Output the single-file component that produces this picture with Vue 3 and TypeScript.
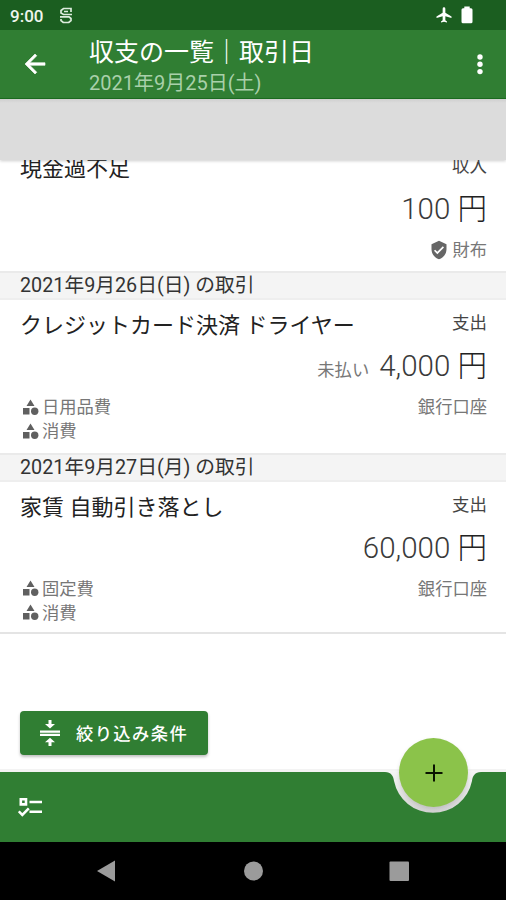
<script setup lang="ts">
interface Entry {
  title: string
  kind: string
  amount: string
  unpaid?: boolean
  account: string
  verified?: boolean
  categories: string[]
}
interface Group {
  date?: string
  entry: Entry
}

const groups: Group[] = [
  { entry: { title: '現金過不足', kind: '収入', amount: '100', account: '財布', verified: true, categories: [] } },
  {
    date: '2021年9月26日(日) の取引',
    entry: { title: 'クレジットカード決済 ドライヤー', kind: '支出', amount: '4,000', unpaid: true, account: '銀行口座', categories: ['日用品費', '消費'] },
  },
  {
    date: '2021年9月27日(月) の取引',
    entry: { title: '家賃 自動引き落とし', kind: '支出', amount: '60,000', account: '銀行口座', categories: ['固定費', '消費'] },
  },
]
</script>

<template>
  <div class="screen">
    <div class="status">
      <span class="clock">9:00</span>
      <svg class="s-icon" width="14" height="17" viewBox="0 0 14 17" fill="none" stroke="#dcebdc" stroke-width="1.7">
        <path d="M12 5V1.500H4.500L2 3.500V6L4.500 7.500H13M1 9.800H10L12 11.500V13.500L9.800 15.500H4.200L2 13.500V12M5 4.500H9" />
      </svg>
      <svg class="plane" width="18" height="18" viewBox="0 0 24 24" fill="#fff">
        <path d="M10.2 9V3.5a1.8 1.8 0 0 1 3.6 0V9L22 14v2l-8.2-2.5V19l2.2 1.5V22l-4-1-4 1v-1.500L10.200 19v-5.500L2 16v-2z" />
      </svg>
      <svg class="battery" width="12" height="18" viewBox="0 0 12 18" fill="#fff">
        <path d="M3.300 0.500h5.400v1.700h1.300q1.500 0 1.500 1.500v12q0 1.500-1.500 1.500h-8q-1.500 0-1.500-1.500v-12q0-1.500 1.500-1.500h1.300z" />
      </svg>
    </div>

    <header class="appbar">
      <svg class="back" width="30" height="30" viewBox="0 0 24 24" fill="#fff" stroke="#fff" stroke-width="0.500">
        <path d="M20 11H7.830l5.590-5.590L12 4l-8 8 8 8 1.410-1.410L7.830 13H20z" />
      </svg>
      <div class="heading">
        <h1>収支の一覧｜取引日</h1>
        <p>2021年9月25日(土)</p>
      </div>
      <svg class="more" width="8" height="24" viewBox="0 0 8 24" fill="#fff">
        <circle cx="4" cy="5" r="2.700" /><circle cx="4" cy="12.300" r="2.700" /><circle cx="4" cy="19.600" r="2.700" />
      </svg>
    </header>

    <div class="banner"></div>

    <main class="content">
      <div class="list">
        <section v-for="group in groups" :key="group.entry.title">
          <h2 v-if="group.date" class="date">{{ group.date }}</h2>
          <article class="entry" :class="{ short: !group.entry.categories.length }">
            <div class="top">
              <h3>{{ group.entry.title }}</h3>
              <span class="kind">{{ group.entry.kind }}</span>
            </div>
            <div class="money">
              <span v-if="group.entry.unpaid" class="unpaid">未払い</span>
              <span class="amount">{{ group.entry.amount }} <span class="yen">円</span></span>
            </div>
            <div class="details">
              <ul>
                <li v-for="name in group.entry.categories" :key="name">
                  <svg width="17" height="17" viewBox="0 0 17 17" fill="#606060">
                    <path d="M8.500 0.500L12.500 7H4.500zM1 9h6.500v6.500H1z" /><circle cx="12.700" cy="12.200" r="3.700" />
                  </svg>
                  {{ name }}
                </li>
              </ul>
              <span class="account">
                <svg v-if="group.entry.verified" width="20" height="20" viewBox="0 0 24 24" fill="#666">
                  <path d="M12 1L3 5v6c0 5.550 3.840 10.740 9 12 5.160-1.260 9-6.450 9-12V5l-9-4zm-2 16l-4-4 1.410-1.410L10 14.170l6.590-6.590L18 9l-8 8z" />
                </svg>
                {{ group.entry.account }}
              </span>
            </div>
          </article>
        </section>
      </div>
      <button class="filter" type="button">
        <svg width="22" height="28" viewBox="0 0 22 28" fill="#fff">
          <path d="M1 11.500h20v2.200H1zM1 14.800h20v2.200H1zM9.500 1h3v4h3.500L11 9.500 6 5h3.500zM9.500 27h3v-3.800h3.500L11 18.700l-5 4.500h3.500z" />
        </svg>
        <span>絞り込み条件</span>
      </button>
    </main>

    <footer class="bottom">
      <svg class="notch" width="506" height="74" viewBox="0 0 506 74">
        <defs>
          <linearGradient id="cradle" x1="0" y1="0" x2="0" y2="1">
            <stop offset="0" stop-color="#f6f6f6" /><stop offset="1" stop-color="#d2d2d2" />
          </linearGradient>
        </defs>
        <path fill="#f3f3f3" d="M0 1H506V5H0z" />
        <path fill="url(#cradle)" d="M384 3H482V46H384z" />
        <path fill="#307e33" d="M0 4H385C391 4 393.500 8 394 13A39.800 39.800 0 0 0 472 13C472.500 8 475 4 481 4H506V74H0z" />
      </svg>
      <svg class="tasks" width="26" height="22" viewBox="0 0 26 22" fill="none" stroke="#fff" stroke-width="2.600">
        <path d="M2.800 2.200h5.200v5.200H2.800zM11.500 5H24M11.500 14.800H24M0.800 14.300l3.500 3.500 6.500-6.500" />
      </svg>
      <button class="fab" type="button" aria-label="追加">
        <svg width="18" height="18" viewBox="0 0 18 18" stroke="#0a1400" stroke-width="2"><path d="M9 .5v17M.5 9h17" /></svg>
      </button>
    </footer>

    <nav class="sysnav">
      <svg width="506" height="58" viewBox="0 0 506 58" fill="#9b9b9b">
        <path d="M97 29L115 18.500V39.500z" /><circle cx="253.500" cy="29" r="9.500" /><rect x="389.500" y="19.500" width="19.500" height="19.500" rx="1" />
      </svg>
    </nav>
  </div>
</template>

<style>
body { background: #fff; }
</style>

<style scoped>
* { box-sizing: border-box; margin: 0; padding: 0; }
svg { display: block; flex: none; }
.screen {
  width: 506px; height: 900px; overflow: hidden;
  display: flex; flex-direction: column;
  font-family: Roboto, "Noto Sans CJK JP", sans-serif; background: #fff; color: #333;
}
.status { height: 30px; flex: none; display: flex; align-items: center; background: #1b5e20; padding: 0 33px 0 10px; color: #eef5ee; }
.clock { font-size: 17px; font-weight: 500; line-height: 30px; width: 49px; padding-top: 1px; }
.plane { margin-left: auto; margin-right: 8px; }
.appbar { height: 69px; flex: none; display: flex; align-items: center; background: #307e33; padding: 0 22px 0 20px; color: #fff; border-bottom: 1px solid #1b6e20; }
.heading { margin-left: 39px; flex: 1; padding-top: 3px; }
.heading h1 { font-size: 25px; line-height: 34px; font-weight: 400; }
.heading p { font-size: 20px; line-height: 26px; color: #a9d0aa; }
.banner { height: 61px; flex: none; background: linear-gradient(#cfcfcf, #dcdcdc 4px); box-shadow: 0 1px 3px rgba(0, 0, 0, .2); position: relative; }
.content { height: 612px; flex: none; overflow: hidden; display: flex; flex-direction: column; }
.list { margin-top: -17px; }
.date { height: 29px; background: #f4f4f4; border-top: 2px solid #eaeaea; border-bottom: 2px solid #eeeeee; padding-left: 20px; font-size: 19.750px; line-height: 26px; font-weight: 400; color: #333; }
.entry { height: 152.500px; padding: 1px 19px 0 20px; }
.entry.short { height: 128px; }
section:last-child .entry { border-bottom: 2px solid #e4e4e4; }
.top { height: 43px; display: flex; justify-content: space-between; }
.top h3 { font-size: 22px; line-height: 50px; font-weight: 400; color: #222; }
.kind { font-size: 17.500px; line-height: 44px; color: #444; }
.money { height: 50px; display: flex; justify-content: flex-end; align-items: baseline; gap: 10px; line-height: 44px; }
.amount { font-size: 29.500px; font-weight: 300; color: #3a3a3a; }
.yen { color: #222; }
.unpaid { font-size: 17.300px; color: #777; }
.details { display: flex; justify-content: space-between; font-size: 17.300px; line-height: 24px; color: #777; padding-top: 1px; }
.details ul { list-style: none; }
.details li, .account { display: flex; align-items: center; height: 24px; }
.details li svg { margin: 0 3px 0 2px; }
.account svg { margin-right: 3px; }
.filter { margin: auto 0 17px 20px; width: 188px; height: 44px; border: 0; border-radius: 4px; background: #307e33; box-shadow: 0 2px 3px rgba(0, 0, 0, .25); color: #fff; display: flex; align-items: center; padding-left: 19px; gap: 15px; font: 500 17.300px Roboto, "Noto Sans CJK JP", sans-serif; letter-spacing: 1.400px; white-space: nowrap; }
.filter span { margin-top: -2px; }
.bottom { height: 70px; flex: none; position: relative; padding: 25px 0 0 18px; }
.notch { position: absolute; left: 0; top: -4px; }
.tasks { position: relative; }
.fab { position: absolute; left: 399px; top: -34px; width: 69px; height: 69px; border: 0; border-radius: 50%; background: #8bc34a; display: grid; place-items: center; box-shadow: 0 2px 4px rgba(0, 0, 0, .12); }
.sysnav { height: 58px; flex: none; background: #000; }
</style>
